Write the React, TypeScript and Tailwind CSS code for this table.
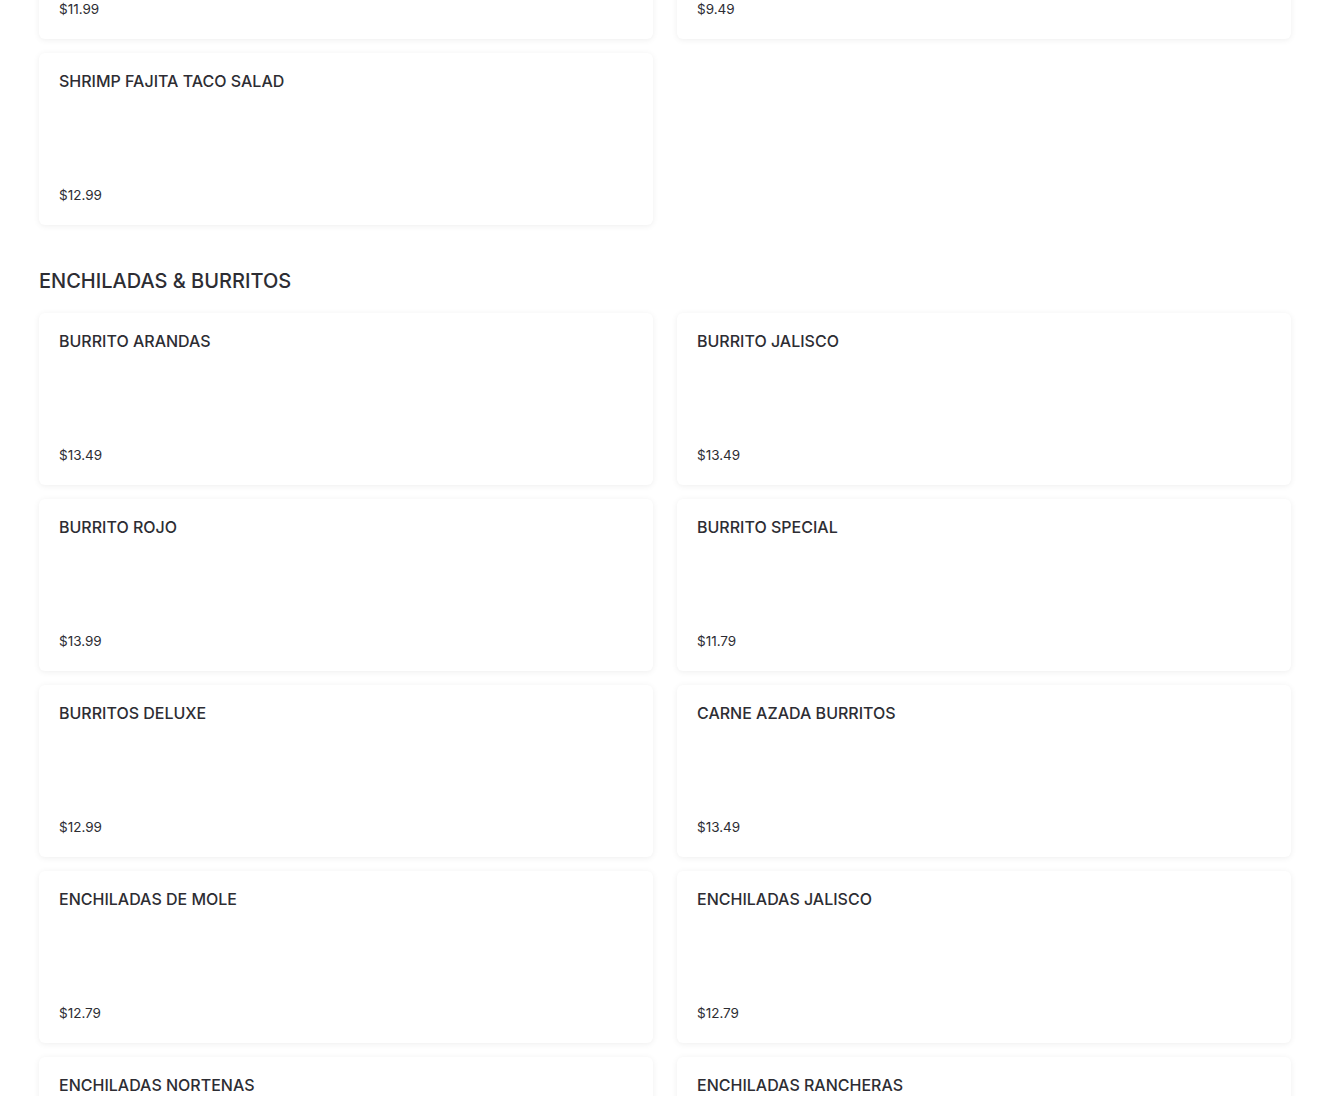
import React from 'react';

interface Item {
  name: string;
  price: string;
}

const previous: Item[] = [
  { name: 'CHICKEN FAJITA TACO SALAD', price: '$11.99' },
  { name: 'TACO SALAD', price: '$9.49' },
  { name: 'SHRIMP FAJITA TACO SALAD', price: '$12.99' },
];

const enchiladas: Item[] = [
  { name: 'BURRITO ARANDAS', price: '$13.49' },
  { name: 'BURRITO JALISCO', price: '$13.49' },
  { name: 'BURRITO ROJO', price: '$13.99' },
  { name: 'BURRITO SPECIAL', price: '$11.79' },
  { name: 'BURRITOS DELUXE', price: '$12.99' },
  { name: 'CARNE AZADA BURRITOS', price: '$13.49' },
  { name: 'ENCHILADAS DE MOLE', price: '$12.79' },
  { name: 'ENCHILADAS JALISCO', price: '$12.79' },
  { name: 'ENCHILADAS NORTENAS', price: '$12.79' },
  { name: 'ENCHILADAS RANCHERAS', price: '$12.79' },
];

const MenuCard: React.FC<{ item: Item }> = ({ item }) => (
  <article className="h-[172px] flex flex-col justify-between bg-white rounded-md px-5 pt-4 pb-5 shadow-[0_1px_6px_rgba(0,0,0,0.07)]">
    <h3 className="text-base leading-6 font-medium text-[#2d2d33]">{item.name}</h3>
    <span className="text-[13.5px] leading-5 text-[#2d2d33]">{item.price}</span>
  </article>
);

export default function App() {
  return (
    <div
      className="min-h-screen bg-white overflow-hidden px-[39px] pb-10"
      style={{ fontFamily: 'Inter, "Noto Sans", sans-serif' }}
    >
      <section className="-mt-[133px] grid grid-cols-2 gap-x-6 gap-y-[14px]">
        {previous.map(item => <MenuCard key={item.name} item={item} />)}
      </section>

      <section className="mt-[42px]">
        <h2 className="text-xl leading-7 font-medium text-[#2d2d33] mb-[18px]">ENCHILADAS &amp; BURRITOS</h2>
        <div className="grid grid-cols-2 gap-x-6 gap-y-[14px]">
          {enchiladas.map(item => <MenuCard key={item.name} item={item} />)}
        </div>
      </section>
    </div>
  );
}
